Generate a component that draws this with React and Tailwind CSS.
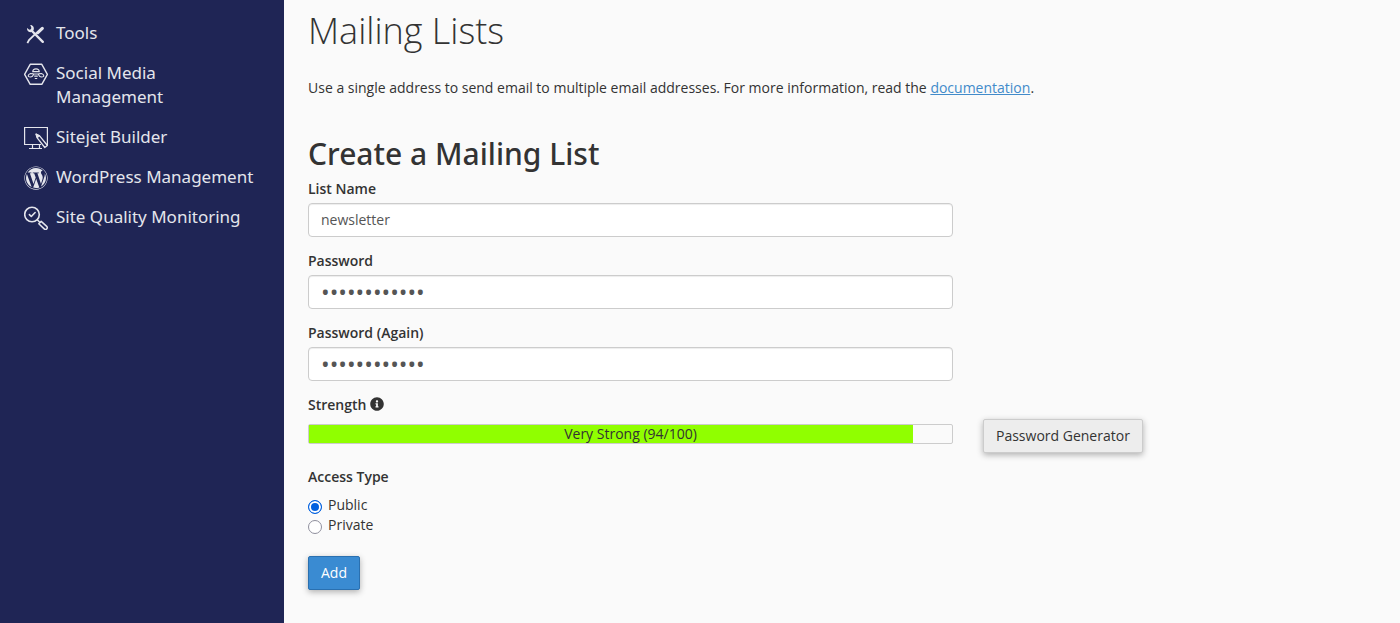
import React, { useState } from "react";
import { FaInfoCircle, FaWordpress } from "react-icons/fa";

const ToolsIcon = () => (
  <svg viewBox="0 0 24 24" className="size-6" fill="none" stroke="currentColor" aria-hidden="true">
    <path d="M3.4 21.2 5 18l8-7.6" strokeWidth="1.8" />
    <path d="m13.8 10.6 4.5-4.2" strokeWidth="3.2" strokeLinecap="round" />
    <path d="m7.5 8.5 11.3 11.3" strokeWidth="2.4" strokeLinecap="round" />
    <path d="M6.2 3c2.8-.1 4.2 2.400 3.500 4.800-.8 2.400-3.500 3-5.300 1.600C3.200 8.500 2.900 7.200 3.100 6l2.200 1.700 1.700-.5.300-1.800z" fill="currentColor" stroke="none" />
  </svg>
);

const SocialIcon = () => (
  <svg viewBox="0 0 24 24" className="size-6" fill="none" stroke="currentColor" aria-hidden="true">
    <path d="M6.2 2.300h11.600L23.400 12.300l-5.600 10H6.200L.6 12.300z" strokeWidth="1.4" strokeLinejoin="round" />
    <path d="M8.800 9.700a3.200 2.900 0 0 1 6.400 0z" strokeWidth="1.2" />
    <path d="M9.800 11.800 6.500 11.500c-3 1.200-3 3.500-.2 3.500 1.700 0 2.800-1 3.500-3.200M14.200 11.800l3.300-.3c3 1.200 3 3.500.2 3.500-1.700 0-2.800-1-3.500-3.200" strokeWidth="1.1" />
    <path d="M10 12h4M10.200 14.200h3.600M10.800 16.500h2.400" strokeWidth="1.2" />
  </svg>
);

const SitejetIcon = () => (
  <svg viewBox="0 0 24 24" className="size-6" fill="none" stroke="currentColor" aria-hidden="true">
    <path d="M17 18.5H.6V1.5h22.8v17H22" strokeWidth="1.2" />
    <path d="M8.5 18.5V22M15.5 18.5V22M5 22.5h13" strokeWidth="1.2" />
    <path d="m12 8 3.6 1.9 7.8 9.6-2.6 2-7.600-9.600z" strokeWidth="1.3" strokeLinejoin="round" />
    <path d="m12 8 3.6 1.9-2.4 2z" fill="currentColor" strokeWidth="1" />
  </svg>
);

const QualityIcon = () => (
  <svg viewBox="0 0 24 24" className="size-6" fill="none" stroke="currentColor" strokeLinecap="round" strokeLinejoin="round" aria-hidden="true">
    <circle cx="8" cy="8.5" r="7.3" strokeWidth="1.6" />
    <path d="m5.4 8.6 1.9 1.9 3.8-4" strokeWidth="1.6" />
    <path d="m13.5 14 2 2" strokeWidth="1.5" />
    <path d="m14.8 17.8 2.4-2.4 5.5 5c1.7 1.7-.8 4.2-2.5 2.5z" strokeWidth="1.5" />
  </svg>
);

const WordPressIcon = () => <FaWordpress className="size-6" aria-hidden="true" />;

const MENU = [
  { label: "Tools", Icon: ToolsIcon },
  { label: "Social Media Management", Icon: SocialIcon },
  { label: "Sitejet Builder", Icon: SitejetIcon },
  { label: "WordPress Management", Icon: WordPressIcon },
  { label: "Site Quality Monitoring", Icon: QualityIcon },
];

const Sidebar = () => (
  <nav className="w-[284px] shrink-0 bg-[#1f2555] px-6 pt-[21px]">
    <ul className="flex flex-col gap-4">
      {MENU.map(({ label, Icon }) => (
        <li key={label}>
          <a href="#" className="flex gap-2 font-['Noto_Sans',sans-serif] text-[17px] leading-6 text-[#e4e5ec]">
            <span className="h-6 w-6 shrink-0 pt-px">
              <Icon />
            </span>
            <span>{label}</span>
          </a>
        </li>
      ))}
    </ul>
  </nav>
);

const Field = ({ id, label, type = "text", value, onChange }) => (
  <div className="mb-3.5 max-w-[645px]">
    <label htmlFor={id} className="mb-1 block font-semibold">
      {label}
    </label>
    <input
      id={id}
      type={type}
      value={value}
      onChange={(e) => onChange(e.target.value)}
      className={`block h-[34px] w-full rounded border border-[#ccc] bg-white px-3 text-[#555] shadow-[inset_0_1px_1px_rgba(0,0,0,0.075)] ${
        type === "password" ? "text-[23px]" : "pb-0.5 text-sm"
      }`}
    />
  </div>
);

const App = () => {
  const [listName, setListName] = useState("newsletter");
  const [password, setPassword] = useState("abcdefghijkl");
  const [passwordAgain, setPasswordAgain] = useState("abcdefghijkl");
  const [access, setAccess] = useState("public");
  const strength = 94;

  return (
    <div className="flex min-h-screen bg-[#fafafa] font-['Open_Sans',sans-serif] text-sm leading-5 text-[#333]">
      <Sidebar />
      <main className="min-w-0 flex-1 px-6 pt-2 pb-8">
        <h1 className="text-4xl leading-[46px] font-light">Mailing Lists</h1>
        <p className="mt-6">
          Use a single address to send email to multiple email addresses. For more information, read the{" "}
          <a href="#" className="text-[#428bca] underline">
            documentation
          </a>
          .
        </p>

        <h2 className="mt-9 mb-1.5 font-['Noto_Sans',sans-serif] text-[30px] leading-[39px] font-medium">
          Create a Mailing List
        </h2>

        <form onSubmit={(e) => e.preventDefault()}>
          <Field id="listName" label="List Name" value={listName} onChange={setListName} />
          <Field id="password" label="Password" type="password" value={password} onChange={setPassword} />
          <Field id="passwordAgain" label="Password (Again)" type="password" value={passwordAgain} onChange={setPasswordAgain} />

          <div className="flex items-start gap-1 font-semibold">
            <span id="strengthLabel">Strength</span>
            <FaInfoCircle className="mt-0.5 size-3.5" aria-hidden="true" />
          </div>
          <div className="mt-1 mb-3.5 flex items-start gap-[30px]">
            <div
              role="meter"
              aria-labelledby="strengthLabel"
              aria-valuemin={0}
              aria-valuemax={100}
              aria-valuenow={strength}
              className="mt-[5px] grid h-5 w-full max-w-[645px] rounded-xs border border-[#ccc]"
            >
              <div className="col-start-1 row-start-1 bg-[#90ff00]" style={{ width: `${strength}%` }} />
              <span className="col-start-1 row-start-1 text-center leading-[18px]">Very Strong ({strength}/100)</span>
            </div>
            <button
              type="button"
              className="h-[34px] shrink-0 rounded-xs border border-[#ccc] bg-[#ededed] px-3 shadow-[0_2px_6px_rgba(0,0,0,0.3)]"
            >
              Password Generator
            </button>
          </div>

          <fieldset>
            <legend className="mb-2 font-semibold">Access Type</legend>
            {["Public", "Private"].map((name) => (
              <label key={name} className="flex items-start gap-1.5">
                <input
                  type="radio"
                  name="access"
                  className="mt-[5px] size-3.5 appearance-none rounded-full border border-[#8f8f9d] bg-white checked:border-[#0060df] checked:bg-[#0060df] checked:shadow-[inset_0_0_0_2px_#fff]"
                  checked={access === name.toLowerCase()}
                  onChange={() => setAccess(name.toLowerCase())}
                />
                {name}
              </label>
            ))}
          </fieldset>

          <button
            type="submit"
            className="mt-[21px] h-[34px] rounded-xs border border-[#2a70b0] bg-[#3a8bd2] px-3 text-white shadow-[0_2px_6px_rgba(0,0,0,0.3)]"
          >
            Add
          </button>
        </form>
      </main>
    </div>
  );
};

export default App;
